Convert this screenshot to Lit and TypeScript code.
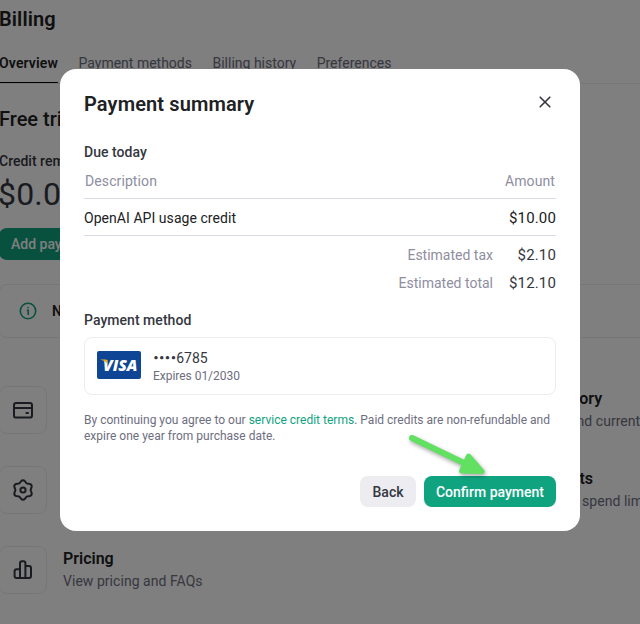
import { LitElement, html, css, svg } from "lit";
import { customElement } from "lit/decorators.js";

// Six-lobed gear outline: radius swings around 8.7 with a lobe pointing straight up.
const gearPoints = Array.from({ length: 72 }, (_, i) => {
  const a = (i * Math.PI) / 36;
  const r = 8.7 + 1.05 * Math.cos(6 * a);
  return `${(11 + r * Math.sin(a)).toFixed(2)},${(11 - r * Math.cos(a)).toFixed(2)}`;
}).join(" ");

const cardIcon = svg`<rect x="2" y="4" width="18" height="14.6" rx="2.2"/><path d="M2 9h18M14.4 14h1.600"/>`;
const gearIcon = svg`<polygon points="${gearPoints}"/><circle cx="11" cy="11" r="2.6"/>`;
const barsIcon = svg`<path d="M8 19V4.200a2 2 0 0 1 2-2h1.400a2 2 0 0 1 2 2V19M8 10.200H4.600a2 2 0 0 0-2 2V17a2 2 0 0 0 2 2H17a2 2 0 0 0 2-2V9a2 2 0 0 0-2-2h-3.600"/>`;

const links = [
  { icon: cardIcon, title: "Payment methods", note: "Add or change payment method" },
  { icon: cardIcon, title: "Billing history", note: "View past and current invoices" },
  { icon: gearIcon, title: "Preferences", note: "Manage billing information" },
  { icon: gearIcon, title: "Usage limits", note: "Set monthly spend limits" },
  { icon: barsIcon, title: "Pricing", note: "View pricing and FAQs" },
];

@customElement("billing-page")
class BillingPage extends LitElement {
  static styles = css`
    :host { display: block; width: 880px; padding-top: 7px; color: #202123; }
    h1, h2 { margin: 0; font-size: 20px; line-height: 24px; }
    h1 { font-weight: 600; margin-left: -1px; letter-spacing: 0.1px; }
    h2 { font-weight: 500; margin-left: -1px; }
    .tabs { display: flex; gap: 20.500px; margin-top: 22px; height: 30px; border-bottom: 1px solid #ececf1; color: #6e6e80; }
    .tab { height: 29px; }
    .tab.on { color: #202123; font-weight: 600; border-bottom: 1px solid #000; margin-left: -1px; letter-spacing: 0.150px; }
    .plan { margin-top: 23px; }
    .label { margin-top: 20px; font-weight: 500; color: #353740; margin-left: -1px; }
    .sum { margin-top: 3px; font-size: 32px; line-height: 40px; color: #353740; margin-left: -2px; letter-spacing: 0.2px; }
    .add { display: inline-flex; align-items: center; height: 32px; margin-top: 14px; margin-left: -1px; padding: 0 12px; border-radius: 8px; background: #10a37f; color: #fff; font-weight: 500; }
    .note { display: flex; align-items: center; gap: 15px; box-sizing: border-box; height: 54px; margin: 24px 0 48px -1px; padding-left: 19px; border: 1px solid #ececf1; border-radius: 8px; font-weight: 600; }
    .note svg { width: 18px; height: 18px; fill: none; stroke: #10a37f; stroke-width: 1.600; stroke-linecap: round; }
    .grid { display: grid; grid-template-columns: 441px 441px; row-gap: 32px; margin-left: -1px; }
    .item { display: flex; gap: 16px; }
    .box { display: flex; align-items: center; justify-content: center; box-sizing: border-box; width: 48px; height: 48px; border: 1px solid #ececf1; border-radius: 8px; }
    .box svg { width: 22px; height: 22px; fill: none; stroke: #353740; stroke-width: 2; stroke-linecap: round; stroke-linejoin: round; }
    .name { padding-top: 1px; font-size: 16px; line-height: 24px; font-weight: 600; }
    .sub { line-height: 20px; color: #6e6e80; letter-spacing: 0.04px; }
  `;
  render() {
    return html`
      <h1>Billing</h1>
      <div class="tabs">
        <div class="tab on">Overview</div>
        <div class="tab">Payment methods</div>
        <div class="tab">Billing history</div>
        <div class="tab">Preferences</div>
      </div>
      <h2 class="plan">Free trial</h2>
      <div class="label">Credit remaining</div>
      <div class="sum">$0.00</div>
      <div class="add">Add payment details</div>
      <div class="note">
        <svg viewBox="0 0 18 18"><circle cx="9" cy="9" r="7.700"/><path d="M8.300 8.300H9.200V12.500M9 5.500v.2"/></svg>
        <span>Note: This does not reflect the status of your account.</span>
      </div>
      <div class="grid">
        ${links.map((l) => html`
          <div class="item">
            <div class="box"><svg viewBox="0 0 22 22">${l.icon}</svg></div>
            <div><div class="name">${l.title}</div><div class="sub">${l.note}</div></div>
          </div>`)}
      </div>`;
  }
}

@customElement("payment-dialog")
class PaymentDialog extends LitElement {
  static styles = css`
    :host { display: block; box-sizing: border-box; width: 520px; height: 462px; padding: 23px 24px 24px; background: #fff; border-radius: 16px; color: #353740; }
    .head { display: flex; justify-content: space-between; align-items: center; height: 24px; padding-right: 6px; }
    h1 { margin: 0; font-size: 20px; line-height: 24px; font-weight: 600; color: #202123; letter-spacing: 0.130px; }
    .x { width: 10px; height: 10px; margin-top: -4px; stroke: #353740; stroke-width: 1.600; stroke-linecap: round; overflow: visible; }
    h2 { margin: 0; font-size: 14px; line-height: 20px; font-weight: 500; letter-spacing: 0.04px; }
    .due { margin-top: 26px; }
    .row { display: flex; justify-content: space-between; border-bottom: 1px solid #d9d9e3; }
    .th { height: 27px; padding: 9px 1px 0; color: #8e8ea0; letter-spacing: 0.1px; }
    .td { height: 27px; padding-top: 9px; color: #202123; letter-spacing: 0.05px; }
    .money { font-size: 15px; letter-spacing: 0.150px; }
    .total { display: grid; grid-template-columns: 1fr 47px; column-gap: 16px; row-gap: 8px; margin-top: 9px; text-align: right; }
    .total span { color: #8e8ea0; }
    .pm { margin-top: 17px; }
    .card { display: flex; align-items: center; gap: 12px; box-sizing: border-box; height: 58px; margin-top: 7px; padding: 0 12px; border: 1px solid #ececf1; border-radius: 8px; }
    .visa { width: 44px; height: 28px; margin-top: -2px; }
    .num { display: flex; align-items: center; height: 20px; }
    .dots { font-family: Inter, sans-serif; font-size: 10.500px; letter-spacing: -0.1px; }
    .exp { font-size: 12px; line-height: 16px; color: #6e6e80; letter-spacing: -0.03px; }
    .terms { margin-top: 17px; font-size: 12px; line-height: 16px; color: #6e6e80; white-space: nowrap; letter-spacing: 0.01px; }
    .terms a { color: #10a37f; }
    .actions { display: flex; justify-content: flex-end; gap: 8px; margin-top: 32px; }
    button { height: 31px; border: 0; padding: 0; border-radius: 8px; font: inherit; font-weight: 500; }
    .back { width: 56px; background: #ececf1; color: #353740; }
    .ok { width: 132px; background: #10a37f; color: #fff; }
  `;
  render() {
    return html`
      <div class="head"><h1>Payment summary</h1>
        <svg class="x" viewBox="0 0 10 10"><path d="M.2.2l9.600 9.600M9.800.2L.2 9.800"/></svg></div>
      <h2 class="due">Due today</h2>
      <div class="row th"><span>Description</span><span>Amount</span></div>
      <div class="row td"><span>OpenAI API usage credit</span><span class="money">$10.00</span></div>
      <div class="total">
        <span>Estimated tax</span><div class="money">$2.10</div>
        <span>Estimated total</span><div class="money">$12.10</div>
      </div>
      <h2 class="pm">Payment method</h2>
      <div class="card">
        <svg class="visa" viewBox="0 0 44 28">
          <rect width="44" height="28" rx="2" fill="#0e4595"/>
          <text x="6" y="19.800" textLength="34.500" lengthAdjust="spacingAndGlyphs" font-family="Open Sans, sans-serif" font-size="16.500" font-weight="800" font-style="italic" fill="#fff">VISA</text>
          <path d="M3.500 8.400H8.300C9.400 8.400 9.900 8.900 10.100 9.800L11 14C9.800 11.500 7.500 9.600 3.500 8.700z" fill="#f2ae14"/>
        </svg>
        <div><div class="num"><span class="dots">••••</span>6785</div><div class="exp">Expires 01/2030</div></div>
      </div>
      <div class="terms">By continuing you agree to our <a>service credit terms</a>. Paid credits are non-refundable and<br>expire one year from purchase date.</div>
      <div class="actions"><button class="back">Back</button><button class="ok">Confirm payment</button></div>`;
  }
}

@customElement("app-root")
class AppRoot extends LitElement {
  static styles = css`
    :host { display: block; position: relative; width: 640px; height: 624px; overflow: hidden; background: #fff; font: 14px/20px Roboto, "Liberation Sans", sans-serif; }
    .scrim { position: absolute; inset: 0; display: flex; justify-content: center; align-items: flex-start; padding-top: 69px; background: rgba(0, 0, 0, 0.5); }
    .arrow { position: absolute; left: 400px; top: 428px; width: 100px; height: 56px; filter: drop-shadow(1px 2px 2px rgba(0, 0, 0, 0.35)); }
  `;
  render() {
    return html`
      <billing-page></billing-page>
      <div class="scrim"><payment-dialog></payment-dialog></div>
      <svg class="arrow" viewBox="0 0 100 56" fill="#62e062" stroke="#62e062" stroke-linecap="round" stroke-linejoin="round">
        <path d="M12 10L66 36" stroke-width="6"/>
        <path d="M68.500 28L82 43.500L61.500 43z" stroke-width="5"/>
      </svg>`;
  }
}
